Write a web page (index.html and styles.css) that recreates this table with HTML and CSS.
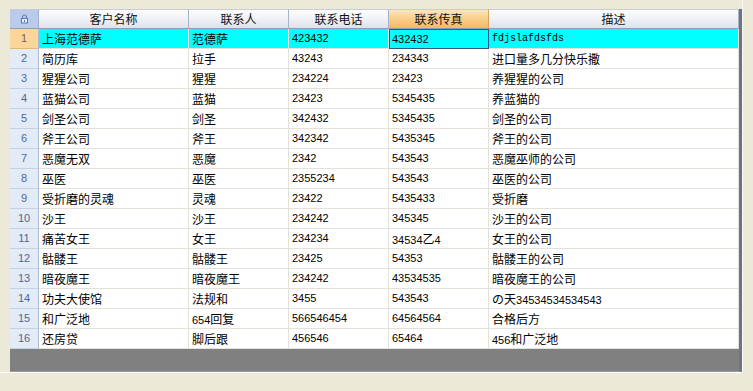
FILE: index.html
```html
<!DOCTYPE html>
<html>
<head>
<meta charset="utf-8">
<link rel="stylesheet" href="styles.css">
</head>
<body>
<div class="panel">
  <div class="grid">
    <div class="rows">
      <div class="th corner"><svg width="9" height="10" viewBox="0 0 9 10"><path d="M2.5 4.5V3a2 2 0 0 1 4 0v1.5" fill="none" stroke="#5a78b8" stroke-width="1"/><rect x="1.5" y="4.5" width="6" height="4.5" fill="#e8eefa" stroke="#5a78b8" stroke-width="1"/><rect x="4" y="6" width="1" height="2" fill="#5a78b8"/></svg></div>
      <div class="th">客户名称</div>
      <div class="th">联系人</div>
      <div class="th">联系电话</div>
      <div class="th hsel">联系传真</div>
      <div class="th">描述</div>

      <div class="rh rsel">1</div><div class="td sel">上海范德萨</div><div class="td sel">范德萨</div><div class="td sel n">423432</div><div class="td sel n act">432432</div><div class="td sel m">fdjslafdsfds</div>
      <div class="rh">2</div><div class="td">简历库</div><div class="td">拉手</div><div class="td n">43243</div><div class="td n">234343</div><div class="td">进口量多几分快乐撒</div>
      <div class="rh">3</div><div class="td">猩猩公司</div><div class="td">猩猩</div><div class="td n">234224</div><div class="td n">23423</div><div class="td">养猩猩的公司</div>
      <div class="rh">4</div><div class="td">蓝猫公司</div><div class="td">蓝猫</div><div class="td n">23423</div><div class="td n">5345435</div><div class="td">养蓝猫的</div>
      <div class="rh">5</div><div class="td">剑圣公司</div><div class="td">剑圣</div><div class="td n">342432</div><div class="td n">5345435</div><div class="td">剑圣的公司</div>
      <div class="rh">6</div><div class="td">斧王公司</div><div class="td">斧王</div><div class="td n">342342</div><div class="td n">5435345</div><div class="td">斧王的公司</div>
      <div class="rh">7</div><div class="td">恶魔无双</div><div class="td">恶魔</div><div class="td n">2342</div><div class="td n">543543</div><div class="td">恶魔巫师的公司</div>
      <div class="rh">8</div><div class="td">巫医</div><div class="td">巫医</div><div class="td n">2355234</div><div class="td n">543543</div><div class="td">巫医的公司</div>
      <div class="rh">9</div><div class="td">受折磨的灵魂</div><div class="td">灵魂</div><div class="td n">23422</div><div class="td n">5435433</div><div class="td">受折磨</div>
      <div class="rh">10</div><div class="td">沙王</div><div class="td">沙王</div><div class="td n">234242</div><div class="td n">345345</div><div class="td">沙王的公司</div>
      <div class="rh">11</div><div class="td">痛苦女王</div><div class="td">女王</div><div class="td n">234234</div><div class="td"><span class="d">34534</span>乙<span class="d">4</span></div><div class="td">女王的公司</div>
      <div class="rh">12</div><div class="td">骷髅王</div><div class="td">骷髅王</div><div class="td n">23425</div><div class="td n">54353</div><div class="td">骷髅王的公司</div>
      <div class="rh">13</div><div class="td">暗夜魔王</div><div class="td">暗夜魔王</div><div class="td n">234242</div><div class="td n">43534535</div><div class="td">暗夜魔王的公司</div>
      <div class="rh">14</div><div class="td">功夫大使馆</div><div class="td">法规和</div><div class="td n">3455</div><div class="td n">543543</div><div class="td">の天<span class="d">34534534534543</span></div>
      <div class="rh">15</div><div class="td">和广泛地</div><div class="td"><span class="d">654</span>回复</div><div class="td n">566546454</div><div class="td n">64564564</div><div class="td">合格后方</div>
      <div class="rh">16</div><div class="td">还房贷</div><div class="td">脚后跟</div><div class="td n">456546</div><div class="td n">65464</div><div class="td"><span class="d">456</span>和广泛地</div>
    </div>
    <div class="empty"></div>
  </div>
</div>
</body>
</html>
```
FILE: styles.css
```css
html, body {
  margin: 0;
  padding: 0;
  background: #ece9d8;
  width: 753px;
  height: 391px;
  overflow: hidden;
}
.panel {
  width: 743px;
  height: 373px;
  padding: 9px 0 0 10px;
  box-sizing: border-box;
  border-right: 1px solid #f8f8f4;
  border-bottom: 1px solid #ffffff;
  display: flex;
  flex-direction: column;
}
.grid {
  width: 732px;
  flex: 1;
  display: flex;
  flex-direction: column;
  background: #808080;
  border-right: 3px solid #6e747e;
  border-bottom: 1px solid #9a9a9a;
  box-sizing: border-box;
}
.rows {
  display: grid;
  grid-template-columns: 29px 150px 100px 100px 100px 250px;
  grid-template-rows: 20px;
  grid-auto-rows: 20px;
  font-family: "Noto Sans CJK SC", "Liberation Sans", sans-serif;
  font-size: 12px;
  color: #000;
}
.th {
  box-sizing: border-box;
  text-align: center;
  background: linear-gradient(#fdfdfe, #f1f2f6 45%, #dfe2ec);
  border-top: 1px solid #c6ccd8;
  border-right: 1px solid #a7b3c6;
  border-bottom: 1px solid #8f9cb2;
  color: #111;
  line-height: 18px;
}
.th.corner {
  background: #b9cbe9;
  border-right: 1px solid #9fb2d0;
  display: flex;
  align-items: center;
  justify-content: center;
}
.th.hsel {
  background: linear-gradient(#fde6bd, #f9cd8a 50%, #f5b961);
  border-right: 1px solid #d7a354;
}
.td {
  box-sizing: border-box;
  padding-left: 3px;
  line-height: 19px;
  white-space: nowrap;
  overflow: hidden;
  background: #ffffff;
  border-right: 1px solid #e3e1d8;
  border-bottom: 1px solid #e3e1d8;
}
.td.sel { background: #00ffff; }
.rh {
  box-sizing: border-box;
  text-align: center;
  line-height: 19px;
  font-family: "Liberation Sans", sans-serif;
  font-size: 11px;
  color: #4d6a96;
  background: #e3ebf7;
  border-right: 1px solid #a9bad3;
  border-bottom: 1px solid #c5d2e5;
}
.rh.rsel {
  background: #fcd59b;
  color: #7c6440;
  border-bottom-color: #e1b77a;
}
.n, .d {
  font-family: "Liberation Sans", sans-serif;
  font-size: 11px;
}
.td.act {
  border: 1px solid #2d5b86;
  padding-left: 2px;
  line-height: 18px;
}
.td.m {
  font-family: "Liberation Mono", monospace;
  font-size: 10px;
}
.empty {
  flex: 1;
  background: #808080;
}
```
